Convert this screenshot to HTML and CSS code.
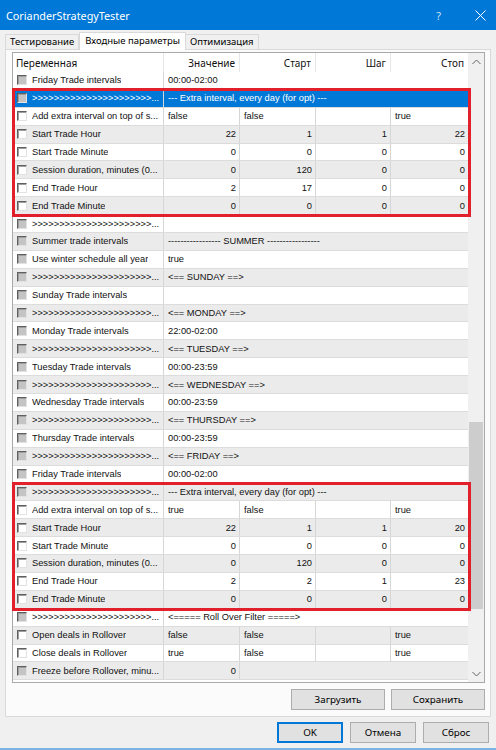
FILE: index.html
```html
<!DOCTYPE html>
<html lang="ru">
<head>
    <meta charset="UTF-8">
    <meta name="viewport" content="width=device-width, initial-scale=1.0">
    <title>CorianderStrategyTester</title>
    <link rel="stylesheet" href="styles.css">
</head>
<body>

    <div class="window">
        <header class="titlebar">
            <span class="title">CorianderStrategyTester</span>
            <span class="help">?</span>
            <span class="close">
                <svg width="11" height="11" viewBox="0 0 11 11">
                    <path d="M0.5 0.5 L10.5 10.5 M10.5 0.5 L0.5 10.5" stroke="#fff" stroke-width="1" fill="none"/>
                </svg>
            </span>
        </header>

        <nav class="tabs">
            <span class="tab">Тестирование</span>
            <span class="tab active">Входные параметры</span>
            <span class="tab">Оптимизация</span>
        </nav>

        <section class="panel">
            <div class="grid">
                <div class="grid-body" id="params">
                    <div class="row head">
                        <div class="cell name">Переменная</div>
                        <div class="cell v">Значение</div>
                        <div class="cell v">Старт</div>
                        <div class="cell v">Шаг</div>
                        <div class="cell v last">Стоп</div>
                    </div>
                </div>
                <div class="scrollbar">
                    <span class="arrow">
                        <svg width="9" height="6" viewBox="0 0 9 6"><path d="M0.5 5 L4.5 1 L8.5 5" stroke="#606060" fill="none"/></svg>
                    </span>
                    <div class="track"><div class="thumb"></div></div>
                    <span class="arrow">
                        <svg width="9" height="6" viewBox="0 0 9 6"><path d="M0.5 1 L4.5 5 L8.5 1" stroke="#606060" fill="none"/></svg>
                    </span>
                </div>
                <!-- highlighted parameter groups -->
                <div class="mark mark-top"></div>
                <div class="mark mark-bottom"></div>
            </div>

            <div class="panel-buttons">
                <button>Загрузить</button>
                <button>Сохранить</button>
            </div>
        </section>

        <footer class="footer">
            <button class="default">OK</button>
            <button>Отмена</button>
            <button>Сброс</button>
        </footer>
    </div>

    <script>
        // Input parameters: [name, optimizable, values]
        // values is a string (one wide cell) or a list of value/start/step/stop
        const SEP = '>>>>>>>>>>>>>>>>>>>>>>...';
        const params = [
            ['Friday Trade intervals', false, '00:00-02:00'],
            [SEP, false, '--- Extra interval, every day (for opt) ---'],
            ['Add extra interval on top of s...', true, ['false', 'false', '', 'true']],
            ['Start Trade Hour', true, [22, 1, 1, 22]],
            ['Start Trade Minute', true, [0, 0, 0, 0]],
            ['Session duration, minutes (0...', true, [0, 120, 0, 0]],
            ['End Trade Hour', true, [2, 17, 0, 0]],
            ['End Trade Minute', true, [0, 0, 0, 0]],
            [SEP, false, ''],
            ['Summer trade intervals', false, '----------------- SUMMER -----------------'],
            ['Use winter schedule all year', false, 'true'],
            [SEP, false, '<== SUNDAY ==>'],
            ['Sunday Trade intervals', false, ''],
            [SEP, false, '<== MONDAY ==>'],
            ['Monday Trade intervals', false, '22:00-02:00'],
            [SEP, false, '<== TUESDAY ==>'],
            ['Tuesday Trade intervals', false, '00:00-23:59'],
            [SEP, false, '<== WEDNESDAY ==>'],
            ['Wednesday Trade intervals', false, '00:00-23:59'],
            [SEP, false, '<== THURSDAY ==>'],
            ['Thursday Trade intervals', false, '00:00-23:59'],
            [SEP, false, '<== FRIDAY ==>'],
            ['Friday Trade intervals', false, '00:00-02:00'],
            [SEP, false, '--- Extra interval, every day (for opt) ---'],
            ['Add extra interval on top of s...', true, ['true', 'false', '', 'true']],
            ['Start Trade Hour', true, [22, 1, 1, 20]],
            ['Start Trade Minute', true, [0, 0, 0, 0]],
            ['Session duration, minutes (0...', true, [0, 120, 0, 0]],
            ['End Trade Hour', true, [2, 2, 1, 23]],
            ['End Trade Minute', true, [0, 0, 0, 0]],
            [SEP, false, '<===== Roll Over Filter =====>'],
            ['Open deals in Rollover', true, ['false', 'false', '', 'true']],
            ['Close deals in Rollover', true, ['true', 'false', '', 'true']],
            ['Freeze before Rollover, minu...', false, [0]]
        ];

        const selected = 1;
        const body = document.getElementById('params');

        function addCell(row, cls, text) {
            const cell = document.createElement('div');
            cell.className = 'cell ' + cls;
            cell.textContent = text;
            row.appendChild(cell);
        }

        params.forEach(([name, opt, values], i) => {
            const row = document.createElement('div');
            row.className = 'row' + (i % 2 ? ' alt' : '') + (i === selected ? ' sel' : '');

            const nameCell = document.createElement('div');
            nameCell.className = 'cell name';
            nameCell.innerHTML = '<span class="box' + (opt ? '' : ' off') + '"></span>';
            const label = document.createElement('span');
            label.className = 'label';
            label.textContent = name;
            nameCell.appendChild(label);
            row.appendChild(nameCell);

            if (typeof values === 'string') {
                addCell(row, 'wide', values);
            } else {
                values.forEach((v, k) => {
                    const cls = 'v' + (typeof v === 'number' ? ' num' : '') + (k === 3 ? ' last' : '');
                    addCell(row, cls, v);
                });
                if (values.length < 4) addCell(row, 'wide', '');
            }
            body.appendChild(row);
        });
    </script>

</body>
</html>
```

FILE: styles.css
```css
/* Dialog window */
body {
    margin: 0;
    width: 496px;
    height: 750px;
    overflow: hidden;
    background: #f0f0f0;
    font-family: 'Noto Sans', 'Open Sans', sans-serif;
    font-size: 9.5px;
    color: #000;
}

.window {
    display: flex;
    flex-direction: column;
    height: 750px;
}

/* Title bar */
.titlebar {
    height: 30px;
    flex: none;
    display: flex;
    align-items: center;
    background: #0078d7;
    color: #fff;
    padding: 0 10px 0 6px;
}

.title {
    flex: 1;
    font-size: 10.8px;
}

.help {
    font-size: 11px;
    color: #cfe4f7;
    margin-right: 34px;
}

.close {
    display: flex;
    width: 11px;
    height: 11px;
}

/* Tabs */
.tabs {
    height: 19px;
    flex: none;
    display: flex;
    align-items: flex-end;
    padding-left: 5px;
}

.tab {
    height: 15px;
    box-sizing: border-box;
    padding: 0 4px;
    border: 1px solid #d9d9d9;
    border-bottom: none;
    line-height: 13px;
    color: #000;
}

.tab + .tab {
    border-left: none;
}

.tab.active {
    height: 18px;
    margin-bottom: -1px;
    padding: 0 5px;
    line-height: 15px;
    background: #fff;
    border-left: 1px solid #d9d9d9;
    position: relative;
    z-index: 1;
}

.tab.active + .tab {
    border-left: none;
}

/* Tab page */
.panel {
    height: 668px;
    flex: none;
    box-sizing: border-box;
    margin: 0 5px;
    padding: 2px 5px 6px 6px;
    border: 1px solid #d9d9d9;
    background: #fbfbfb;
}

/* Parameters list */
.grid {
    position: relative;
    height: 631px;
    box-sizing: border-box;
    display: flex;
    border: 1px solid #a9a9a9;
    background: #fff;
}

.grid-body {
    width: 455px;
    overflow: hidden;
    font-family: 'Liberation Sans', Arial, sans-serif;
    font-size: 9.3px;
    color: #111;
}

.row {
    display: flex;
    height: 17.9px;
    box-sizing: border-box;
    border-bottom: 1px solid #dcdcdc;
    background: #fff;
}

.row.alt {
    background: #ebebeb;
}

.row.sel {
    background: #0078d7;
    color: #fff;
}

.row.head {
    height: 19px;
    border-bottom: none;
    background: #fff;
    font-family: 'Noto Sans', 'Open Sans', sans-serif;
    font-size: 10px;
}

.cell {
    box-sizing: border-box;
    display: flex;
    align-items: center;
    white-space: nowrap;
    overflow: hidden;
    border-right: 1px solid #d6d6d6;
    padding: 0 4px;
}

.cell.name {
    width: 151px;
    flex: none;
    padding-left: 4px;
}

.cell.v {
    width: 76px;
    flex: none;
}

.cell.v:nth-child(4) {
    width: 75px;
}

.cell.v.last {
    width: 77px;
    border-right: none;
}

.cell.num {
    justify-content: flex-end;
    padding-right: 3px;
}

.cell.wide {
    flex: 1;
    border-right: none;
}

.row.head .cell {
    border-right-color: #e6e6e6;
}

.row.head .cell.v {
    justify-content: flex-end;
    padding-right: 4px;
}

.row.head .cell.name {
    padding-left: 3px;
}

.box {
    width: 10px;
    height: 10px;
    flex: none;
    box-sizing: border-box;
    border: 1px solid;
    border-color: #5f5f5f #e2e2e2 #e2e2e2 #5f5f5f;
    box-shadow: inset 1px 1px 0 #9d9d9d;
    background: #fff;
    margin-right: 5px;
}

.box.off {
    background: #c4c4c4;
}

.label {
    overflow: hidden;
}

/* Vertical scrollbar */
.scrollbar {
    width: 16px;
    display: flex;
    flex-direction: column;
    background: #f0f0f0;
}

.arrow {
    height: 17px;
    display: flex;
    align-items: center;
    justify-content: center;
    flex: none;
}

.track {
    flex: 1;
    display: flex;
    flex-direction: column;
    padding: 352px 1px 56px 1px;
}

.thumb {
    flex: 1;
    background: #cdcdcd;
}

/* Red frames around edited groups */
.mark {
    position: absolute;
    left: -1px;
    width: 459px;
    height: 129px;
    box-sizing: border-box;
    border: 3px solid #e1202b;
}

.mark-top {
    top: 35px;
}

.mark-bottom {
    top: 429px;
}

/* Buttons */
button {
    height: 21px;
    box-sizing: border-box;
    font-family: 'Noto Sans', 'Open Sans', sans-serif;
    font-size: 9.8px;
    color: #000;
    background: #e1e1e1;
    border: 1px solid #adadad;
    padding: 0;
}

.panel-buttons {
    display: flex;
    justify-content: flex-end;
    gap: 6px;
    margin-top: 6px;
}

.panel-buttons button {
    width: 94px;
}

.footer {
    flex: 1;
    display: flex;
    justify-content: flex-end;
    align-items: flex-start;
    gap: 7px;
    padding: 5px 7px 0 0;
    border-bottom: 2px solid #7db4e4;
}

.footer button {
    width: 66px;
}

button.default {
    border-color: #0078d7;
    box-shadow: inset 0 0 0 1px #0078d7;
}
```
